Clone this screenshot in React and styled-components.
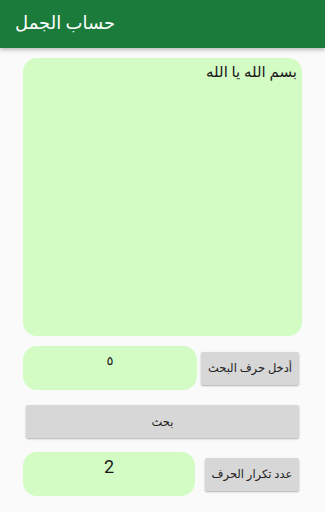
import React from "react"
import styled, { createGlobalStyle } from "styled-components"

const GlobalStyle = createGlobalStyle`
  html, body {
    margin: 0;
    padding: 0;
    background: #fafafa;
    font-family: Roboto, "DejaVu Sans", sans-serif;
  }
`

const Screen = styled.div`
  width: 325px;
  height: 512px;
  background: #fafafa;
  overflow: hidden;
`

const AppBar = styled.header`
  height: 48px;
  background: #1b7b3a;
  box-shadow: 0 2px 4px rgba(0, 0, 0, 0.25);
  display: flex;
  align-items: center;
  padding: 0 0 4px 15px;
  box-sizing: border-box;
  color: #fff;
  font-size: 18px;
`

const Content = styled.main`
  padding: 10px 23px 0 23px;
  display: flex;
  flex-direction: column;
`

const GreenBox = styled.div`
  background: #d3fcc5;
  border-radius: 14px;
  box-sizing: border-box;
  color: #1a1a1a;
`

const TextArea = styled(GreenBox)`
  height: 278px;
  direction: rtl;
  text-align: right;
  padding: 5px 5px;
  font-size: 15px;
`

const Row = styled.div`
  display: flex;
  align-items: center;
  margin-top: ${(p) => p.top}px;
`

const Field = styled(GreenBox)`
  width: ${(p) => p.w}px;
  height: 44px;
  text-align: center;
  padding-top: ${(p) => p.pt}px;
  font-size: ${(p) => p.size}px;
`

const Button = styled.button`
  margin-left: ${(p) => p.ml || 0}px;
  width: ${(p) => p.w}px;
  height: 33px;
  border: none;
  border-radius: 2px;
  background: #d7d7d7;
  box-shadow: 0 1px 2px rgba(0, 0, 0, 0.3);
  font-family: Roboto, "DejaVu Sans", sans-serif;
  font-size: 11.5px;
  color: #222;
  padding: 0;
`

export default function App() {
  return (
    <Screen>
      <GlobalStyle />
      <AppBar>حساب الجمل</AppBar>
      <Content>
        <TextArea>بسم الله يا الله</TextArea>
        <Row top={10}>
          <Field w={174} pt={7} size={13}>٥</Field>
          <Button ml={4} w={98}>أدخل حرف البحث</Button>
        </Row>
        <Row top={15}>
          <Button ml={3} w={273}>بحث</Button>
        </Row>
        <Row top={14}>
          <Field w={172} pt={4} size={18}>2</Field>
          <Button ml={10} w={94}>عدد تكرار الحرف</Button>
        </Row>
      </Content>
    </Screen>
  )
}
